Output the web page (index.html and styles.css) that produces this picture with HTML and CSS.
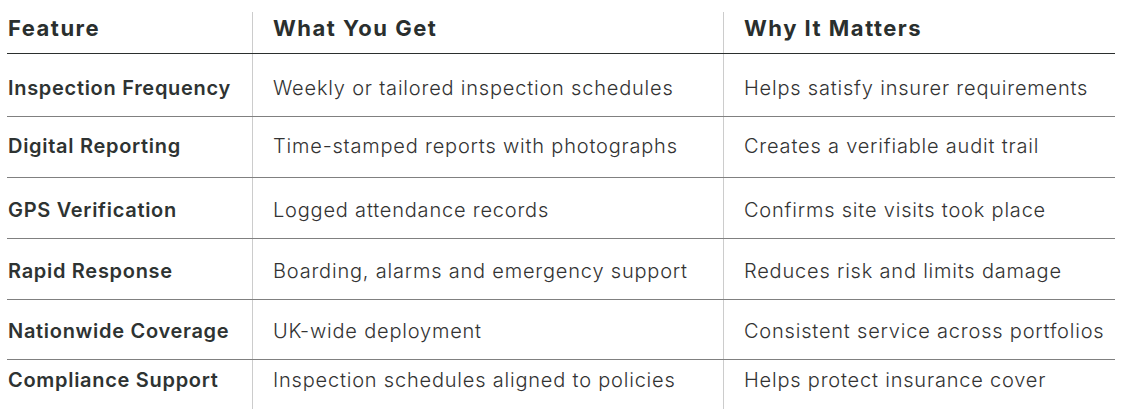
FILE: index.html
```html
<!DOCTYPE html>
<html lang="en">
<head>
<meta charset="utf-8">
<title>Features</title>
<link rel="stylesheet" href="styles.css">
</head>
<body>
<div class="table">
  <div class="row head">
    <div class="cell c1">Feature</div>
    <div class="cell c2">What You Get</div>
    <div class="cell c3">Why It Matters</div>
  </div>
  <div class="row r1">
    <div class="cell c1">Inspection Frequency</div>
    <div class="cell c2">Weekly or tailored inspection schedules</div>
    <div class="cell c3">Helps satisfy insurer requirements</div>
  </div>
  <div class="row r2">
    <div class="cell c1">Digital Reporting</div>
    <div class="cell c2">Time-stamped reports with photographs</div>
    <div class="cell c3">Creates a verifiable audit trail</div>
  </div>
  <div class="row">
    <div class="cell c1">GPS Verification</div>
    <div class="cell c2">Logged attendance records</div>
    <div class="cell c3">Confirms site visits took place</div>
  </div>
  <div class="row">
    <div class="cell c1">Rapid Response</div>
    <div class="cell c2">Boarding, alarms and emergency support</div>
    <div class="cell c3">Reduces risk and limits damage</div>
  </div>
  <div class="row r5">
    <div class="cell c1">Nationwide Coverage</div>
    <div class="cell c2">UK-wide deployment</div>
    <div class="cell c3">Consistent service across portfolios</div>
  </div>
  <div class="row last">
    <div class="cell c1">Compliance Support</div>
    <div class="cell c2">Inspection schedules aligned to policies</div>
    <div class="cell c3">Helps protect insurance cover</div>
  </div>
</div>
</body>
</html>
```
FILE: styles.css
```css
html, body {
  margin: 0;
  background: #ffffff;
}
body {
  padding: 12px 8px 0 7px;
  font-family: Inter, "Open Sans", sans-serif;
  color: #333333;
}
.table {
  display: flex;
  flex-direction: column;
}
.row {
  box-sizing: border-box;
  display: grid;
  grid-template-columns: 245px 471px 1fr;
  height: 61px;
  border-bottom: 1px solid #808080;
}
.row.head {
  height: 42px;
  border-bottom-color: #2b2f2e;
}
.row.r1 { height: 63px; }
.row.r5 { height: 60px; }
.row.last { height: 49px; border-bottom: none; }
.cell {
  display: flex;
  align-items: flex-end;
  padding-bottom: 16px;
  font-size: 20px;
  font-weight: 300;
  line-height: 24px;
  letter-spacing: 0.8px;
  white-space: nowrap;
}
.r2 .cell { padding-bottom: 19px; }
.last .cell { padding-bottom: 17px; }
.cell.c1 {
  padding-left: 1px;
  font-weight: 600;
  letter-spacing: 0.7px;
  color: #2e3332;
}
.cell.c2, .cell.c3 {
  padding-left: 20px;
  border-left: 1px solid #cccccc;
}
.head .cell {
  font-size: 22px;
  font-weight: 700;
  letter-spacing: 1.5px;
  color: #2a2f2e;
  padding-bottom: 13px;
}
```
